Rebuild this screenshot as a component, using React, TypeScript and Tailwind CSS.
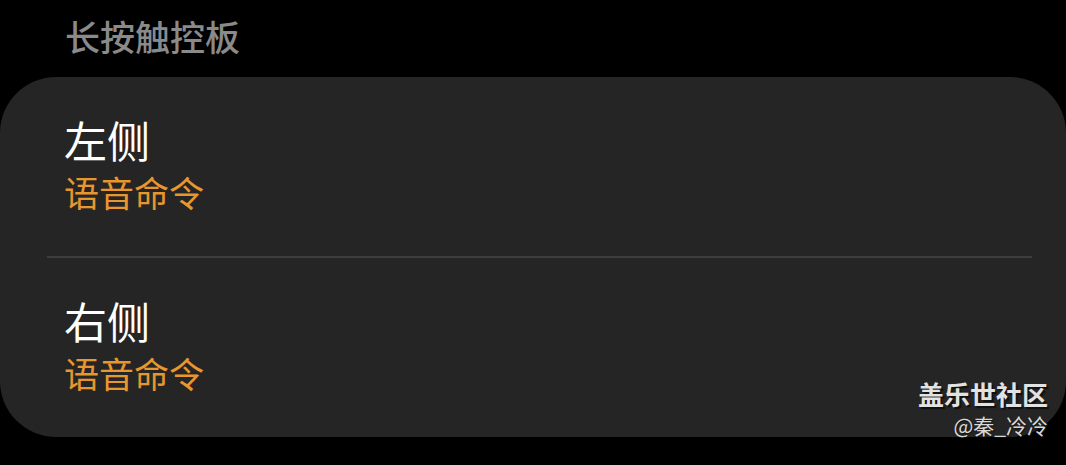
export default function App() {
  const items = [
    { title: "左侧", value: "语音命令" },
    { title: "右侧", value: "语音命令" },
  ];

  return (
    <div
      className="relative w-[1066px] h-[465px] bg-black overflow-hidden"
      style={{ fontFamily: '"Noto Sans CJK SC", "Noto Sans", sans-serif' }}
    >
      {/* Section header */}
      <div className="h-[77px] pl-[65px] pt-[16px]">
        <div className="text-[35px] leading-[40px] font-medium text-[#8a8a8a]">长按触控板</div>
      </div>

      {/* Card */}
      <div className="w-[1066px] h-[360px] bg-[#252525] rounded-[56px] flex flex-col">
        {items.map((item, i) => (
          <div key={i} className="flex flex-col">
            {i > 0 && <div className="ml-[47px] mr-[34px] h-[2px] bg-[#3d3d3d]" />}
            <div className="h-[179px] pl-[64px] pt-[36px]">
              <div className="text-[43px] leading-[52px] text-white">{item.title}</div>
              <div className="mt-[7px] text-[35px] leading-[40px] text-[#e8962e]">{item.value}</div>
            </div>
          </div>
        ))}
      </div>

      {/* Watermark */}
      <div className="absolute right-[18px] top-[376px] flex flex-col items-end">
        <div className="text-[26px] leading-[36px] font-bold text-[#e2e2e2] [text-shadow:2px_2px_1px_#111]">
          盖乐世社区
        </div>
        <div className="text-[21px] leading-[26px] text-[#d8d8d8] [text-shadow:1px_1px_1px_#111]">
          @秦_冷冷
        </div>
      </div>
    </div>
  );
}
